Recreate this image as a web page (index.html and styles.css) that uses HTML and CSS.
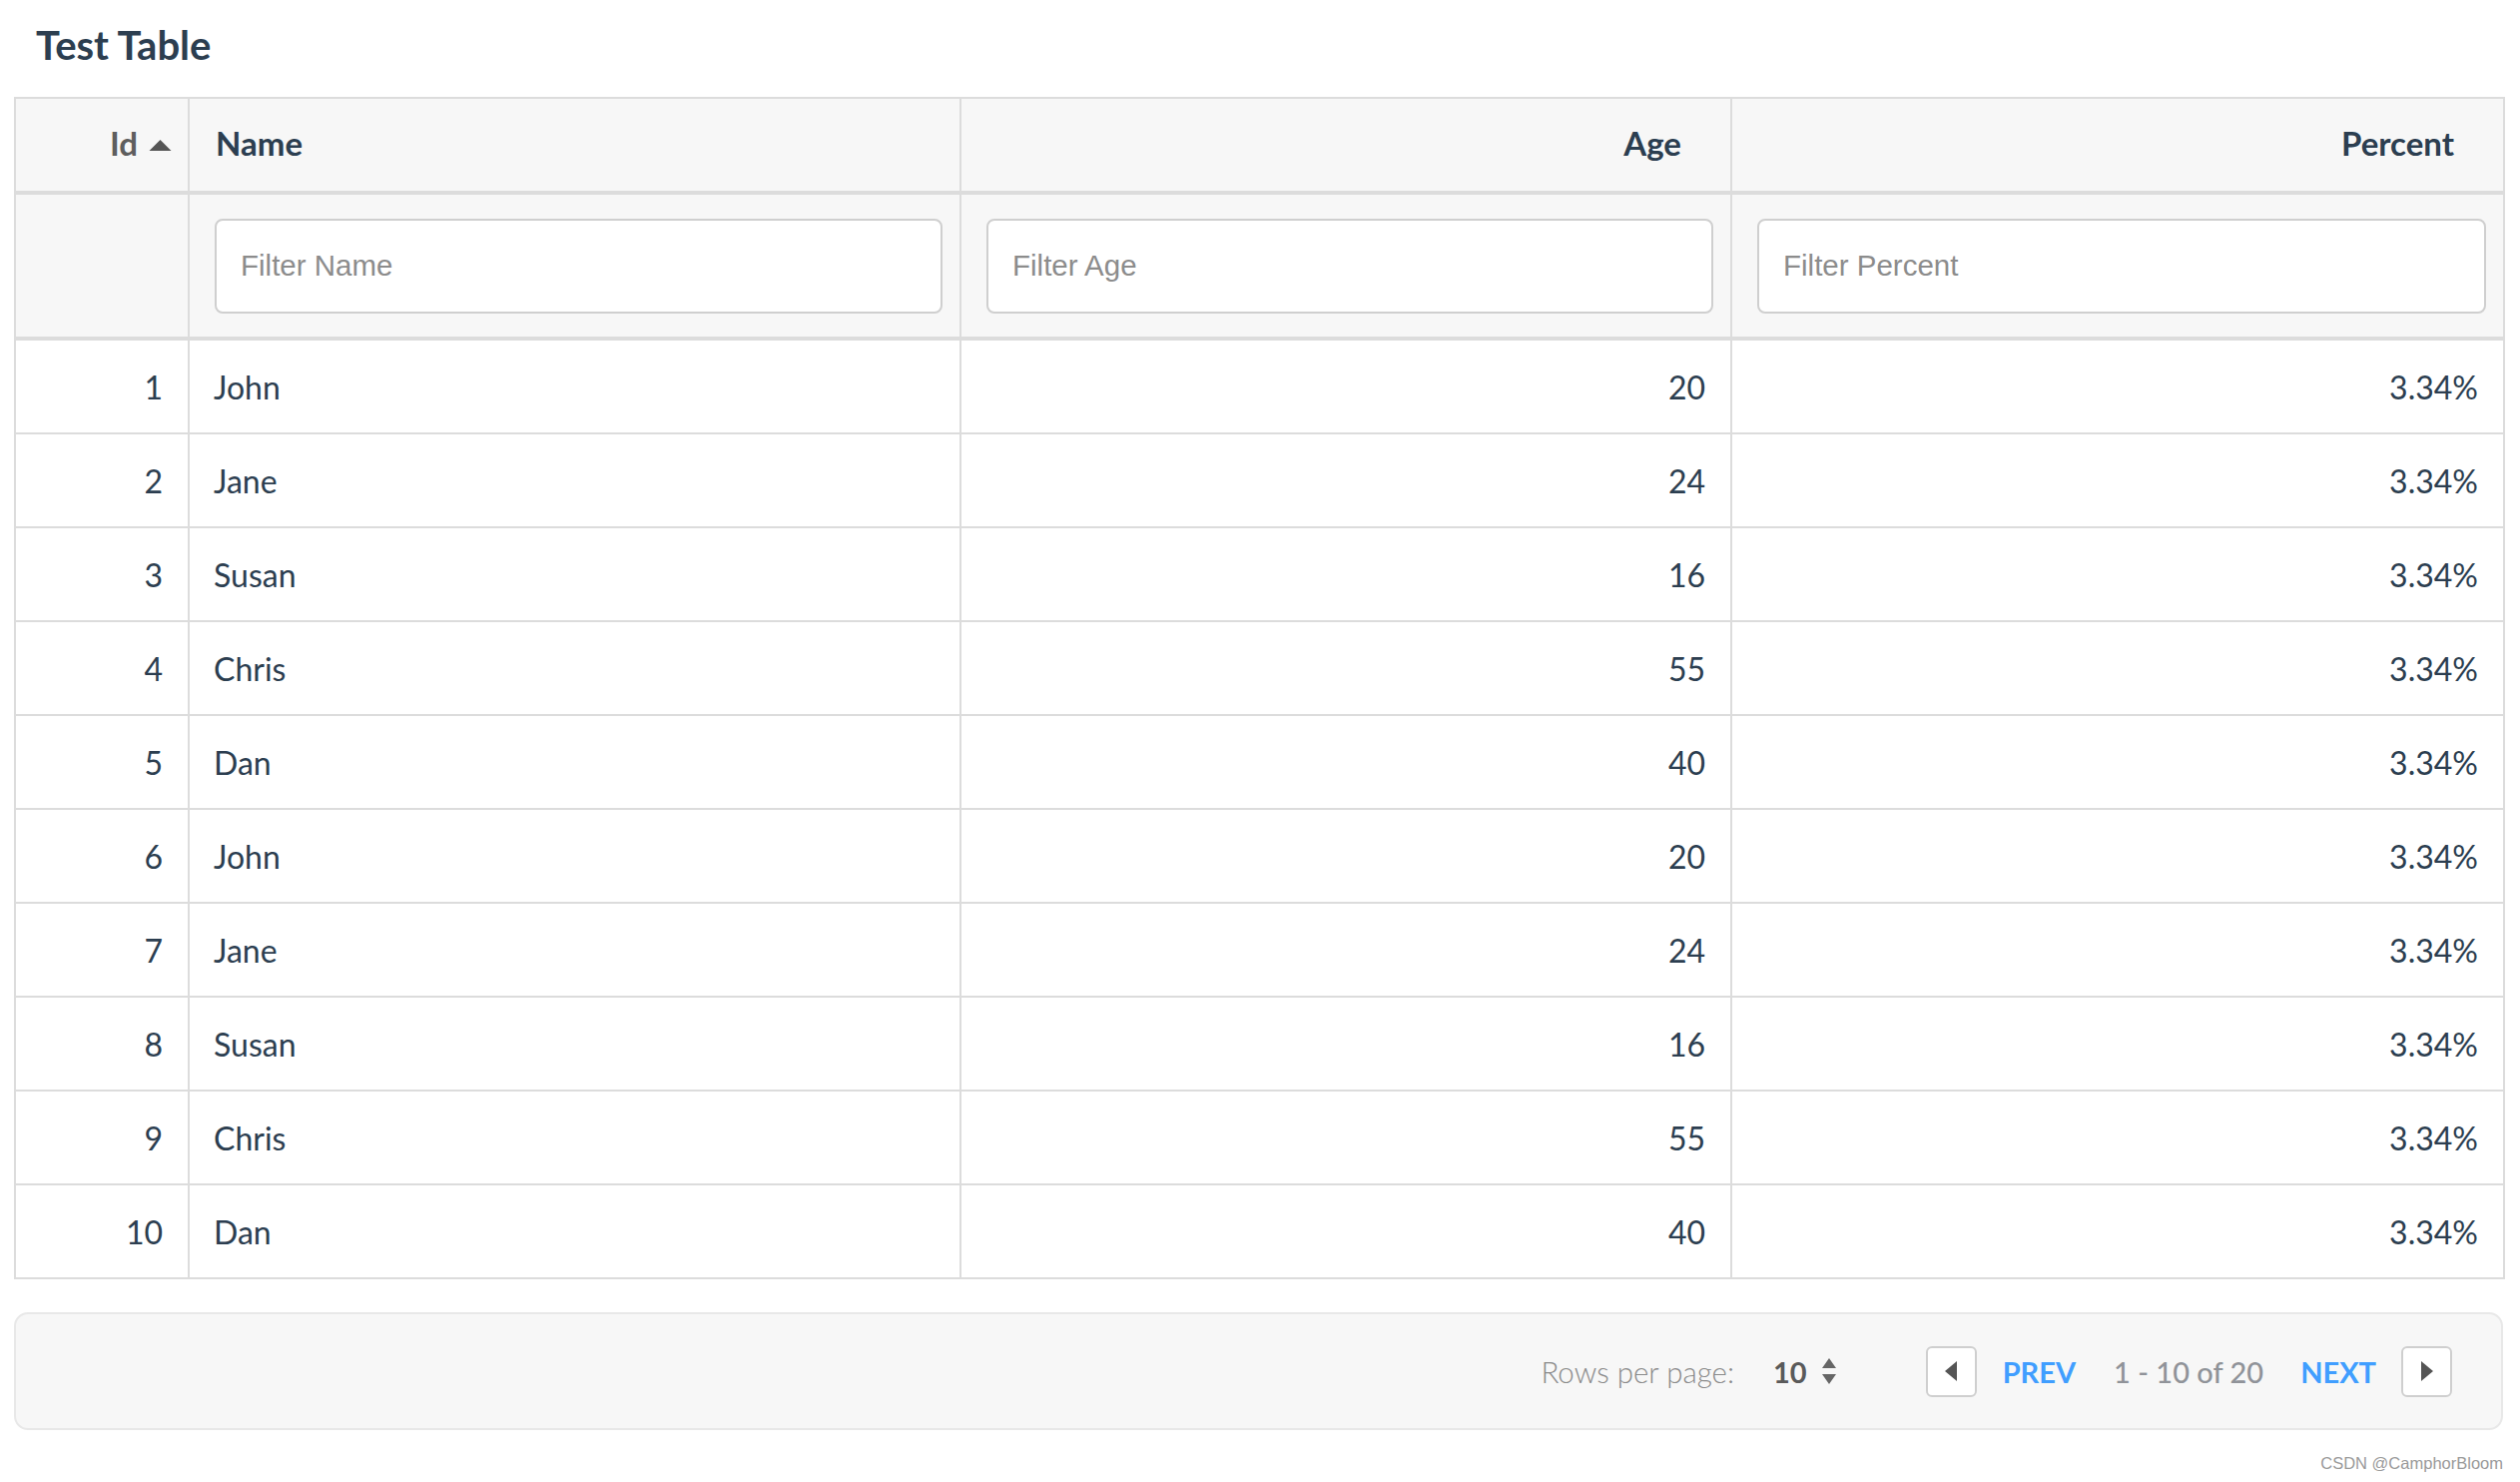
FILE: index.html
```html
<!DOCTYPE html>
<html lang="en">
<head>
    <meta charset="UTF-8">
    <title>Test Table</title>
    <link rel="stylesheet" href="styles.css">
</head>
<body>
<div class="page">
    <h1 class="title">Test Table</h1>
    <table class="grid">
        <colgroup>
            <col class="c-id"><col class="c-name"><col class="c-age"><col class="c-pct">
        </colgroup>
        <thead>
            <tr class="head">
                <th class="num sorted">Id<svg class="sort-icon" viewBox="0 0 24 12" width="23" height="11"><path d="M12 0 L24 12 L0 12 Z" fill="#555"/></svg></th>
                <th class="left">Name</th>
                <th class="num sortable">Age</th>
                <th class="num sortable">Percent</th>
            </tr>
            <tr class="filters">
                <th></th>
                <th><input type="text" placeholder="Filter Name"></th>
                <th><input type="text" placeholder="Filter Age"></th>
                <th><input type="text" placeholder="Filter Percent"></th>
            </tr>
        </thead>
        <tbody>
            <tr><td class="num">1</td><td>John</td><td class="num">20</td><td class="num">3.34%</td></tr>
            <tr><td class="num">2</td><td>Jane</td><td class="num">24</td><td class="num">3.34%</td></tr>
            <tr><td class="num">3</td><td>Susan</td><td class="num">16</td><td class="num">3.34%</td></tr>
            <tr><td class="num">4</td><td>Chris</td><td class="num">55</td><td class="num">3.34%</td></tr>
            <tr><td class="num">5</td><td>Dan</td><td class="num">40</td><td class="num">3.34%</td></tr>
            <tr><td class="num">6</td><td>John</td><td class="num">20</td><td class="num">3.34%</td></tr>
            <tr><td class="num">7</td><td>Jane</td><td class="num">24</td><td class="num">3.34%</td></tr>
            <tr><td class="num">8</td><td>Susan</td><td class="num">16</td><td class="num">3.34%</td></tr>
            <tr><td class="num">9</td><td>Chris</td><td class="num">55</td><td class="num">3.34%</td></tr>
            <tr><td class="num">10</td><td>Dan</td><td class="num">40</td><td class="num">3.34%</td></tr>
        </tbody>
    </table>

    <div class="footer">
        <span class="label">Rows per page:</span>
        <span class="per-page">10<svg class="updown" viewBox="0 0 14 26" width="14" height="26"><path d="M7 0 L14 10 L0 10 Z M0 16 L14 16 L7 26 Z" fill="#666"/></svg></span>
        <button class="nav prev"><svg viewBox="0 0 12 20" width="12" height="20"><path d="M12 0 L12 20 L0 10 Z" fill="#555"/></svg></button>
        <span class="link">PREV</span>
        <span class="info">1 - 10 of 20</span>
        <span class="link">NEXT</span>
        <button class="nav next"><svg viewBox="0 0 12 20" width="12" height="20"><path d="M0 0 L12 10 L0 20 Z" fill="#555"/></svg></button>
    </div>
    <div class="mark">CSDN @CamphorBloom</div>
</div>
</body>
</html>
```

FILE: styles.css
```css
body { margin: 0; background: #fff; font-family: Lato, "Noto Sans", sans-serif; color: #2c3e50; }
.page { padding: 0 17px 0 14px; }
.title { margin: 0 0 30px; padding: 23px 0 0 22px; font-size: 40px; line-height: 44px; font-weight: 700; color: #2c3e50; }

/* table */
.grid { width: 100%; border-collapse: collapse; table-layout: fixed; border: 2px solid #dcdcdc; font-size: 32px; }
.c-id { width: 174px; }
.c-name { width: 773px; }
.c-age { width: 772px; }
.c-pct { width: 774px; }
.grid th, .grid td { border: 2px solid #dcdcdc; }
.grid .num { text-align: right; }
.grid .left { text-align: left; }

.head th { height: 89px; padding: 0 26px 3px; background: #f7f7f7; border-bottom-width: 4px; font-size: 33px; line-height: 1.2; font-weight: 700; color: #2c3e50; }
.head th.sorted { padding-right: 16px; color: #5e5e5e; }
.head th.sortable { padding-right: 49px; }
.sort-icon { margin-left: 11px; vertical-align: 5px; }

.filters th { height: 142px; padding: 0 17px 0 25px; background: #f7f7f7; border-bottom-width: 4px; }
.filters input { display: block; box-sizing: border-box; width: 100%; height: 95px; padding: 0 24px; border: 2px solid #cfcfcf; border-radius: 8px; background: #fff; font-family: "Liberation Sans", Arial, sans-serif; font-size: 29.5px; color: #333; outline: none; }
.filters input::placeholder { color: #8c8c8c; }

.grid td { height: 92px; padding: 0 25px 0 24px; font-weight: 400; color: #2c3e50; }

/* footer */
.footer { display: flex; align-items: center; justify-content: flex-end; margin-top: 33px; height: 114px; padding-right: 49px; background: #f7f7f7; border: 2px solid #e8e8e8; border-radius: 14px; font-size: 29px; }
.label { color: #8a8a8a; font-weight: 300; font-size: 29.5px; }
.per-page { display: flex; align-items: center; gap: 15px; margin-left: 39px; font-weight: 700; color: #5a5a5a; }
.nav { display: flex; align-items: center; justify-content: center; box-sizing: border-box; width: 51px; height: 51px; padding: 0; background: #fff; border: 2px solid #cfcfcf; border-radius: 6px; }
.nav.prev { margin-left: 90px; }
.link { margin-left: 26px; font-weight: 700; color: #409eff; }
.link + .nav { margin-left: 25px; }
.info { margin-left: 38px; font-weight: 500; color: #909399; }
.info + .link { margin-left: 37px; }
.mark { margin-top: 24px; text-align: right; font-family: "Liberation Sans", Arial, sans-serif; font-size: 16.5px; color: #9a9a9a; }
```
